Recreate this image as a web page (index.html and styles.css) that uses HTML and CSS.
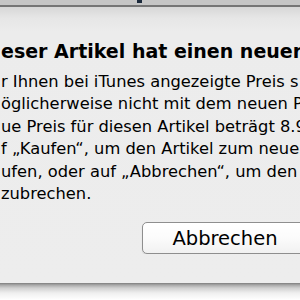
FILE: index.html
```html
<!DOCTYPE html>
<html lang="de">
<head>
<meta charset="utf-8">
<link rel="stylesheet" href="styles.css">
</head>
<body>
<div class="sheet">
  <div class="toolbar"><span class="toolbar-mark"></span></div>
  <div class="content">
    <div class="title">eser Artikel hat einen neuen P</div>
    <div class="message">
      <div class="line">r Ihnen bei iTunes angezeigte Preis s</div>
      <div class="line">öglicherweise nicht mit dem neuen Pr</div>
      <div class="line">ue Preis für diesen Artikel beträgt 8.9</div>
      <div class="line">f „Kaufen“, um den Artikel zum neue</div>
      <div class="line">ufen, oder auf „Abbrechen“, um den</div>
      <div class="line">zubrechen.</div>
    </div>
    <div class="actions">
      <button class="btn">Abbrechen</button>
    </div>
  </div>
</div>
<div class="drop-shadow"></div>
</body>
</html>
```
FILE: styles.css
```css
html, body {
  margin: 0;
  padding: 0;
}
body {
  width: 300px;
  height: 300px;
  overflow: hidden;
  background: #ffffff;
  font-family: "DejaVu Sans", "Liberation Sans", sans-serif;
  color: #000;
}
.sheet {
  height: 283px;
  display: flex;
  flex-direction: column;
  background: linear-gradient(#b9b9b9 0, #d6d6d6 6px, #e6e6e6 18px, #ececec 32px, #ededed 100%);
}
.toolbar {
  height: 5px;
  flex: none;
  background: #c6c6c6;
  border-bottom: 2px solid #767676;
  display: flex;
  align-items: flex-start;
}
.toolbar-mark {
  width: 5px;
  height: 3px;
  margin-left: 137px;
  background: #1c2a3c;
}
.content {
  padding-top: 33px;
  padding-left: 1px;
  white-space: nowrap;
  overflow: hidden;
}
.title {
  font-size: 19px;
  font-weight: bold;
  line-height: 22px;
}
.message {
  margin-top: 9px;
  font-size: 16.3px;
  line-height: 22.4px;
}
.actions {
  margin-top: 17px;
  padding-left: 141px;
  display: flex;
}
.btn {
  flex: none;
  width: 166px;
  height: 32px;
  padding: 1px 0 0 0;
  border: 1px solid #8e8e8e;
  border-radius: 5px;
  background: linear-gradient(#ffffff 0, #fbfbfb 50%, #f1f1f1 100%);
  font-family: "DejaVu Sans", "Liberation Sans", sans-serif;
  font-size: 19.5px;
  color: #000;
  box-shadow: 0 1px 1px rgba(0,0,0,0.12);
}
.drop-shadow {
  height: 17px;
  background: linear-gradient(#7d7d7d 0, #a8a8a8 2px, #d0d0d0 5px, #efefef 10px, #ffffff 17px);
}
```
